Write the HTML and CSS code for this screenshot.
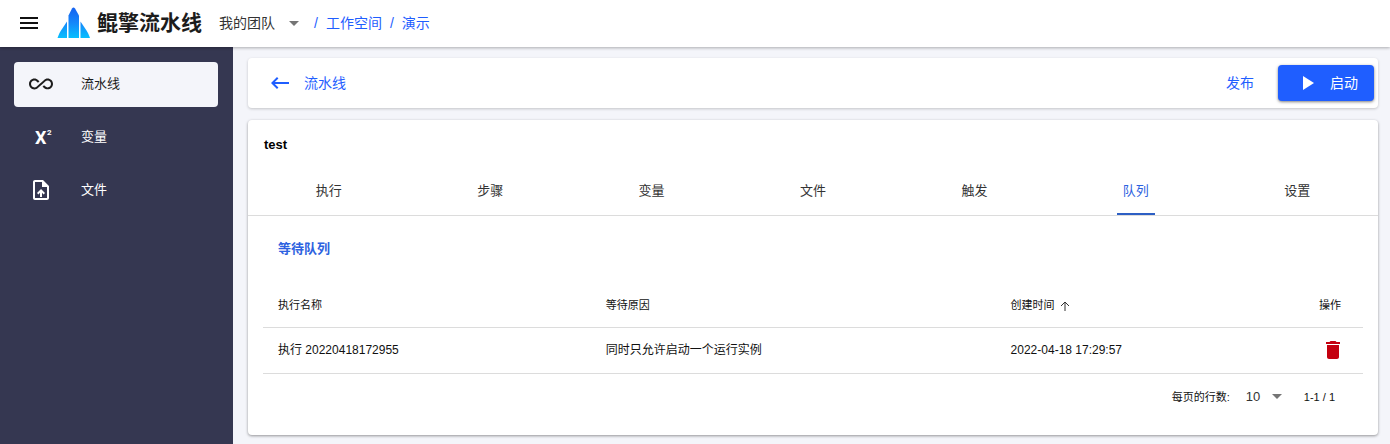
FILE: index.html
```
<!DOCTYPE html>
<html lang="zh-CN">
<head>
<meta charset="utf-8">
<title>鲲擎流水线</title>
<link rel="stylesheet" href="styles.css">
</head>
<body>
<div class="app">
  <header class="topbar">
    <button class="menu-button" type="button" aria-label="菜单">
      <svg class="icon" viewBox="0 0 24 24"><path d="M3 18h18v-2H3v2zm0-5h18v-2H3v2zm0-7v2h18V6H3z"/></svg>
    </button>
    <div class="brand">
      <svg class="brand-logo" viewBox="0 0 33 32" aria-hidden="true">
        <defs>
          <linearGradient id="logo-fill" gradientUnits="userSpaceOnUse" x1="0" y1="0" x2="0" y2="32">
            <stop offset="0" stop-color="#1560f0"/>
            <stop offset="0.5" stop-color="#1588fa"/>
            <stop offset="1" stop-color="#06c3ff"/>
          </linearGradient>
        </defs>
        <g fill="url(#logo-fill)">
          <path d="M11.500 31V8.500L15 1.500Q16.500 -0.500 18 1.500L22 8.500V31z"/>
          <path d="M10 14.500V31H0.500C1.500 28 2.500 26 4 23.500z"/>
          <path d="M23.500 14.500V31H33C32 28 31 26 29.500 23.500z"/>
        </g>
      </svg>
      <span class="brand-name">鲲擎流水线</span>
    </div>
    <div class="select-wrap team">
      <select class="select" aria-label="团队"><option>我的团队</option></select>
      <svg class="caret" viewBox="0 0 10 5" aria-hidden="true"><path d="M0 0h10L5 5z"/></svg>
    </div>
    <nav class="crumbs" aria-label="路径">
      <span>/</span><a href="#">工作空间</a><span>/</span><a href="#">演示</a>
    </nav>
  </header>
  <div class="body">
    <nav class="sidebar" aria-label="主导航">
      <a class="side-item is-active" href="#">
        <svg class="icon" viewBox="0 0 24 24"><path d="M18.6 6.62c-1.44 0-2.8.56-3.77 1.53L12 10.66 10.48 12h.01L7.8 14.39c-.64.64-1.49.99-2.4.99-1.87 0-3.39-1.51-3.39-3.38S3.53 8.62 5.4 8.62c.91 0 1.76.35 2.44 1.03l1.13 1 1.51-1.34L9.22 8.2C8.2 7.18 6.84 6.62 5.4 6.62 2.42 6.62 0 9.04 0 12s2.42 5.38 5.4 5.38c1.44 0 2.8-.56 3.77-1.53l2.83-2.5.01.01L13.52 12h-.01l2.69-2.39c.64-.64 1.49-.99 2.4-.99 1.87 0 3.39 1.51 3.39 3.38s-1.52 3.38-3.39 3.38c-.9 0-1.76-.35-2.44-1.03l-1.14-1.01-1.51 1.34 1.27 1.12c1.02 1.01 2.37 1.57 3.82 1.57 2.98 0 5.4-2.41 5.4-5.38s-2.42-5.37-5.4-5.37z"/></svg>
        <span>流水线</span>
      </a>
      <a class="side-item" href="#">
        <svg class="icon" viewBox="0 0 24 24" aria-hidden="true"><text class="var-base" x="6" y="19">X</text><text class="var-power" x="18" y="10">2</text></svg>
        <span>变量</span>
      </a>
      <a class="side-item" href="#">
        <svg class="icon" viewBox="0 0 24 24"><path d="M14 2H6c-1.1 0-1.99.9-1.99 2L4 20c0 1.1.89 2 1.99 2H18c1.100 0 2-.9 2-2V8l-6-6zm4 18H6V4h7v5h5v11zM8 15.010l1.410 1.410L11 14.840V19h2v-4.160l1.590 1.590L16 15.010 12.010 11z"/></svg>
        <span>文件</span>
      </a>
    </nav>
    <main class="main">
      <section class="card toolbar">
        <a class="back" href="#">
          <svg class="icon" viewBox="0 0 24 24"><path d="M21 11H6.830l3.580-3.590L9 6l-6 6 6 6 1.410-1.410L6.830 13H21z"/></svg>
          <span>流水线</span>
        </a>
        <div class="actions">
          <button class="text-button" type="button">发布</button>
          <button class="start-button" type="button">
            <svg class="icon" viewBox="0 0 24 24"><path d="M8 5v14l11-7z"/></svg>
            <span>启动</span>
          </button>
        </div>
      </section>
      <section class="card detail">
        <h1 class="title">test</h1>
        <div class="tabs" role="tablist">
          <button class="tab" type="button" role="tab"><span>执行</span></button>
          <button class="tab" type="button" role="tab"><span>步骤</span></button>
          <button class="tab" type="button" role="tab"><span>变量</span></button>
          <button class="tab" type="button" role="tab"><span>文件</span></button>
          <button class="tab" type="button" role="tab"><span>触发</span></button>
          <button class="tab is-active" type="button" role="tab" aria-selected="true"><span>队列</span></button>
          <button class="tab" type="button" role="tab"><span>设置</span></button>
        </div>
        <div class="panel">
          <h2 class="subtitle">等待队列</h2>
          <table class="queue">
            <thead>
              <tr>
                <th class="col-name">执行名称</th>
                <th class="col-reason">等待原因</th>
                <th class="col-time">创建时间 <svg class="sort" viewBox="0 0 12 12" aria-hidden="true"><path d="M6 11V2M2 6l4-4 4 4"/></svg></th>
                <th class="col-action">操作</th>
              </tr>
            </thead>
            <tbody>
              <tr>
                <td>执行 20220418172955</td>
                <td>同时只允许启动一个运行实例</td>
                <td>2022-04-18 17:29:57</td>
                <td class="col-action"><button class="delete-button" type="button" aria-label="删除"><svg class="icon" viewBox="0 0 24 24"><path d="M6 19c0 1.100.9 2 2 2h8c1.100 0 2-.9 2-2V7H6v12zM19 4h-3.500l-1-1h-5l-1 1H5v2h14V4z"/></svg></button></td>
              </tr>
            </tbody>
          </table>
          <div class="pager">
            <label for="page-size">每页的行数:</label>
            <div class="select-wrap size">
              <select class="select" id="page-size"><option>10</option></select>
              <svg class="caret" viewBox="0 0 10 5" aria-hidden="true"><path d="M0 0h10L5 5z"/></svg>
            </div>
            <span>1-1 / 1</span>
          </div>
        </div>
      </section>
    </main>
  </div>
</div>
</body>
</html>
```
FILE: styles.css
```
* {
  box-sizing: border-box;
}

body {
  margin: 0;
  background: #f4f5fa;
  color: #111;
  font-family: "Liberation Sans", "Noto Sans CJK SC", sans-serif;
  font-size: 13px;
  line-height: 20px;
}

a {
  color: inherit;
  text-decoration: none;
}

button,
select {
  padding: 0;
  border: 0;
  background: none;
  color: inherit;
  font: inherit;
  cursor: pointer;
}

.icon {
  display: block;
  flex: none;
  width: 24px;
  height: 24px;
  overflow: visible;
  fill: currentColor;
}

.app {
  display: flex;
  flex-direction: column;
  min-height: 100vh;
}

.topbar {
  z-index: 1;
  display: flex;
  align-items: center;
  height: 47px;
  padding: 0 17px 1px;
  background: #fff;
  box-shadow: 0 1px 3px rgba(0, 0, 0, 0.3);
  font-size: 14px;
}

.brand {
  display: flex;
  align-items: center;
  gap: 7px;
  margin: 0 17px 0 16px;
}

.brand-logo {
  width: 33px;
  height: 32px;
}

.brand-name {
  color: #1c1c1c;
  font-size: 21px;
  font-weight: 700;
  line-height: 32px;
}

.select-wrap {
  display: grid;
  align-items: center;
}

.select-wrap > * {
  grid-area: 1 / 1;
}

.select {
  width: 100%;
  appearance: none;
}

.caret {
  justify-self: end;
  width: 10px;
  height: 5px;
  fill: #757575;
  pointer-events: none;
}

.team {
  width: 80px;
  color: #333;
}

.crumbs {
  display: flex;
  gap: 8px;
  margin-left: 15px;
  color: #1f5eff;
}

.body {
  display: flex;
  flex: 1;
}

.sidebar {
  display: flex;
  flex: none;
  flex-direction: column;
  gap: 8px;
  width: 233px;
  padding: 15px 15px 15px 14px;
  background: #353751;
  color: #fff;
}

.side-item {
  display: flex;
  align-items: center;
  gap: 28px;
  height: 45px;
  padding: 0 15px 1px;
  border-radius: 4px;
}

.side-item.is-active {
  background: #f4f5fa;
  color: #1c1c1c;
}

.var-base,
.var-power {
  font-family: Roboto, sans-serif;
  font-size: 18px;
  font-weight: 700;
}

.var-power {
  font-size: 8px;
}

.main {
  display: flex;
  flex: 1;
  flex-direction: column;
  gap: 12px;
  min-width: 0;
  padding: 11px 12px 9px 15px;
}

.card {
  border-radius: 4px;
  background: #fff;
  box-shadow: 0 1px 3px rgba(0, 0, 0, 0.2);
}

.toolbar {
  display: flex;
  align-items: center;
  justify-content: space-between;
  height: 50px;
  padding: 0 4px 0 20px;
  color: #1f5eff;
  font-size: 14px;
}

.back,
.actions {
  display: flex;
  align-items: center;
}

.back {
  gap: 12px;
}

.actions {
  gap: 24px;
}

.start-button {
  display: flex;
  align-items: center;
  gap: 11px;
  height: 36px;
  padding: 0 16px 0 17px;
  border-radius: 4px;
  background: #1f5eff;
  box-shadow: 0 1px 3px rgba(0, 0, 0, 0.5);
  color: #fff;
}

.detail {
  flex: 1;
  box-shadow: 0 1px 3px rgba(0, 0, 0, 0.4);
}

.title {
  margin: 0;
  padding: 15px 16px 12px;
  color: #000;
  font-size: 13px;
  font-weight: 700;
}

.tabs {
  display: flex;
  border-bottom: 1px solid #dcdcdc;
}

.tab {
  display: flex;
  flex: 1;
  justify-content: center;
  color: #333;
}

.tab span {
  padding: 14px 6px 12px;
  border-bottom: 2px solid transparent;
}

.tab.is-active span {
  border-color: #2d5fc4;
  color: #2d62e0;
}

.panel {
  padding: 23px 15px;
}

.subtitle {
  margin: 0 15px 22px;
  color: #2d62e0;
  font-size: 13px;
  font-weight: 700;
}

.queue {
  width: 100%;
  border-collapse: collapse;
  table-layout: fixed;
  font-size: 12px;
}

.queue th,
.queue td {
  height: 46px;
  padding: 0 15px;
  border-bottom: 1px solid #dcdcdc;
  text-align: left;
}

.queue th {
  padding-top: 2px;
  font-size: 11px;
  font-weight: 400;
}

.col-name {
  width: 29.8%;
}

.col-reason {
  width: 36.8%;
}

.col-time {
  width: 22%;
}

.queue .col-action {
  padding-right: 22px;
  text-align: right;
}

.queue td.col-action {
  padding-right: 18px;
}

.sort {
  width: 12px;
  height: 12px;
  margin-left: 1px;
  fill: none;
  stroke: #333;
  vertical-align: middle;
}

.delete-button {
  display: inline-block;
  color: #c4000f;
  vertical-align: middle;
}

.pager {
  display: flex;
  align-items: center;
  justify-content: flex-end;
  gap: 16px;
  padding: 13px 28px 0 0;
  font-size: 11px;
}

.size {
  width: 36px;
  margin-right: 6px;
  color: #333;
  font-size: 13px;
}
```
